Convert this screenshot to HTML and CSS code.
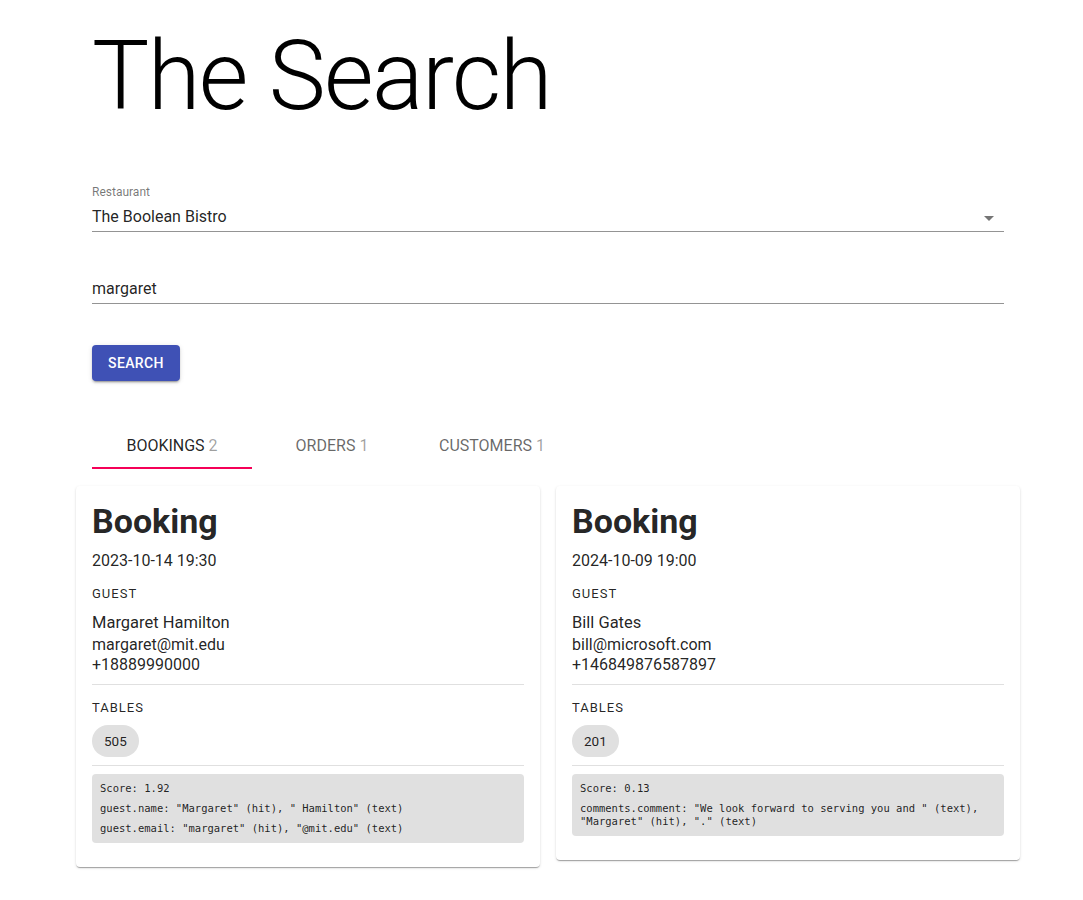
FILE: index.html
```html
<!DOCTYPE html>
<html lang="en">
<head>
<meta charset="utf-8">
<title>The Search</title>
<link rel="stylesheet" href="styles.css">
</head>
<body>
<main class="page">
  <h1 class="title">The Search</h1>

  <div class="field">
    <div class="field-label">Restaurant</div>
    <div class="field-input select">
      <span class="value">The Boolean Bistro</span>
      <svg class="arrow" width="24" height="24" viewBox="0 0 24 24"><path d="M7 10l5 5 5-5z" fill="rgba(0,0,0,0.54)"/></svg>
    </div>
  </div>

  <div class="field field-text">
    <div class="field-input">
      <span class="value">margaret</span>
    </div>
  </div>

  <button class="btn">Search</button>

  <nav class="tabs">
    <div class="tab active">Bookings <span class="count">2</span></div>
    <div class="tab">Orders <span class="count">1</span></div>
    <div class="tab">Customers <span class="count">1</span></div>
  </nav>

  <section class="grid">
    <article class="card">
      <h2 class="card-title">Booking</h2>
      <div class="date">2023-10-14 19:30</div>
      <div class="overline">Guest</div>
      <div class="name">Margaret Hamilton</div>
      <div class="contact">margaret@mit.edu</div>
      <div class="contact">+18889990000</div>
      <hr class="divider">
      <div class="overline overline-tables">Tables</div>
      <div class="chips"><span class="chip">505</span></div>
      <hr class="divider divider-chips">
      <div class="score">
        <div class="score-row">Score: 1.92</div>
        <div class="score-row">guest.name: "Margaret" (hit), " Hamilton" (text)</div>
        <div class="score-row">guest.email: "margaret" (hit), "@mit.edu" (text)</div>
      </div>
    </article>

    <article class="card">
      <h2 class="card-title">Booking</h2>
      <div class="date">2024-10-09 19:00</div>
      <div class="overline">Guest</div>
      <div class="name">Bill Gates</div>
      <div class="contact">bill@microsoft.com</div>
      <div class="contact">+146849876587897</div>
      <hr class="divider">
      <div class="overline overline-tables">Tables</div>
      <div class="chips"><span class="chip">201</span></div>
      <hr class="divider divider-chips">
      <div class="score">
        <div class="score-row">Score: 0.13</div>
        <div class="score-row">comments.comment: "We look forward to serving you and " (text), "Margaret" (hit), "." (text)</div>
      </div>
    </article>
  </section>
</main>
</body>
</html>
```

FILE: styles.css
```css
* { box-sizing: border-box; }

html, body {
  margin: 0;
  padding: 0;
  background: #fff;
}

body {
  font-family: Roboto, "Liberation Sans", Arial, sans-serif;
  color: rgba(0, 0, 0, 0.87);
}

.page {
  width: 912px;
  margin-left: 92px;
  padding-top: 20px;
  padding-bottom: 40px;
}

.title {
  margin: 0;
  font-size: 96px;
  font-weight: 300;
  line-height: 112px;
  color: #000;
  letter-spacing: -1.6px;
}

.field {
  margin-top: 52px;
}

.field-label {
  font-size: 12px;
  line-height: 16px;
  color: rgba(0, 0, 0, 0.54);
}

.field-input {
  display: flex;
  align-items: center;
  justify-content: space-between;
  margin-top: 5px;
  padding-bottom: 2px;
  border-bottom: 1px solid rgba(0, 0, 0, 0.42);
  height: 27px;
}

.field-input .value {
  font-size: 16px;
  line-height: 24px;
  color: rgba(0, 0, 0, 0.87);
}

.arrow {
  margin-right: 3px;
  margin-top: 1px;
}

.field-text {
  margin-top: 45px;
}

.field-text .field-input {
  margin-top: 0;
}

.btn {
  display: block;
  margin-top: 41px;
  height: 36px;
  padding: 0 16px;
  border: 0;
  border-radius: 4px;
  background: #3f51b5;
  color: #fff;
  font-family: Roboto, "Liberation Sans", Arial, sans-serif;
  font-size: 14px;
  font-weight: 500;
  letter-spacing: 0.4px;
  text-transform: uppercase;
  box-shadow: 0 3px 1px -2px rgba(0, 0, 0, 0.2), 0 2px 2px 0 rgba(0, 0, 0, 0.14), 0 1px 5px 0 rgba(0, 0, 0, 0.12);
}

.tabs {
  display: flex;
  margin-top: 40px;
}

.tab {
  width: 160px;
  height: 48px;
  display: flex;
  align-items: center;
  justify-content: center;
  gap: 4px;
  font-size: 16px;
  text-transform: uppercase;
  color: rgba(0, 0, 0, 0.6);
  border-bottom: 2px solid transparent;
  padding-top: 2px;
}

.tab.active {
  color: rgba(0, 0, 0, 0.87);
  border-bottom-color: #f50057;
}

.count {
  color: rgba(0, 0, 0, 0.38);
}

.grid {
  display: grid;
  grid-template-columns: 1fr 1fr;
  gap: 16px;
  margin: 17px -16px 0;
  align-items: start;
}

.card {
  background: #fff;
  border-radius: 4px;
  padding: 16px 16px 24px;
  box-shadow: 0 2px 1px -1px rgba(0, 0, 0, 0.2), 0 1px 1px 0 rgba(0, 0, 0, 0.14), 0 1px 3px 0 rgba(0, 0, 0, 0.12);
}

.card-title {
  margin: 0;
  font-size: 34px;
  font-weight: 700;
  line-height: 38px;
  color: rgba(0, 0, 0, 0.87);
}

.date {
  margin-top: 9px;
  font-size: 16px;
  line-height: 24px;
}

.overline {
  margin-top: 11px;
  font-size: 13px;
  line-height: 20px;
  letter-spacing: 1px;
  text-transform: uppercase;
}

.name {
  margin-top: 7px;
  font-size: 16.5px;
  line-height: 24px;
}

.contact {
  font-size: 16px;
  line-height: 20px;
}

.divider {
  margin: 9px 0 0;
  border: 0;
  border-top: 1px solid rgba(0, 0, 0, 0.12);
  height: 0;
}

.overline-tables {
  margin-top: 13px;
}

.chips {
  margin-top: 7px;
  display: flex;
}

.chip {
  display: inline-flex;
  align-items: center;
  height: 32px;
  padding: 0 12px;
  border-radius: 16px;
  background: #e0e0e0;
  font-size: 13.5px;
  color: rgba(0, 0, 0, 0.87);
}

.divider-chips {
  margin-top: 8px;
}

.score {
  margin-top: 8px;
  background: #e0e0e0;
  border-radius: 4px;
  padding: 8px;
  display: flex;
  flex-direction: column;
  gap: 7px;
  font-family: "DejaVu Sans Mono", "Liberation Mono", monospace;
  font-size: 10.5px;
  line-height: 13px;
  color: rgba(0, 0, 0, 0.87);
}
```
